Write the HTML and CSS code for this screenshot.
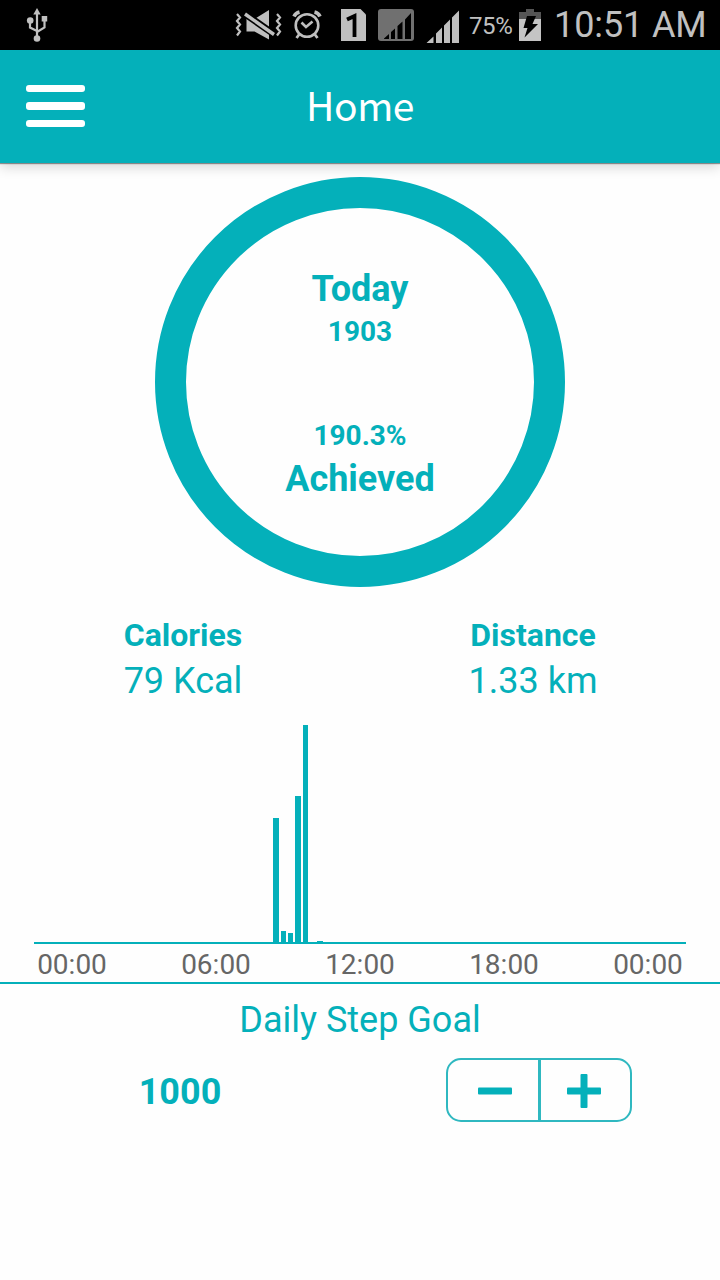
FILE: index.html
```html
<!DOCTYPE html>
<html lang="en">
<head>
  <meta charset="utf-8">
  <meta name="viewport" content="width=device-width, initial-scale=1.0">
  <title>Home</title>
  <link rel="stylesheet" href="styles.css">
</head>
<body>
  <div class="status-bar">
    <svg class="icon-usb" width="22" height="36" viewBox="0 0 22 36" fill="none" stroke="#c0c0c0" stroke-width="2.200">
      <path d="M11 5v26M4 13v7.500l7 3.500M18.500 11v9.500l-7.500 4.500"/>
      <path d="M11 1l3.700 6.500H7.300z" fill="#c0c0c0" stroke="none"/>
      <circle cx="4.200" cy="13.500" r="3.300" fill="#c0c0c0" stroke="none"/>
      <rect x="15.700" y="9" width="5.500" height="5.500" fill="#c0c0c0" stroke="none"/>
      <circle cx="11" cy="31.500" r="3.300" fill="#c0c0c0" stroke="none"/>
    </svg>
    <svg class="icon-tray" width="228" height="50" viewBox="232 0 228 50" fill="#bfbfbf">
      <!-- vibrate / muted -->
      <path d="M246.500 19h8L269 10v29.500l-14.500-8h-8z"/>
      <path d="M243 12.500l33 23" stroke="#000" stroke-width="7"/>
      <path d="M245 14l29 20.500" stroke="#bfbfbf" stroke-width="3.400"/>
      <path d="M237 14l3 3.500-3 3.500 3 3.500-3 3.500 3 3.500-3 4M277 14l3 3.500-3 3.500 3 3.500-3 3.500 3 3.500-3 4" fill="none" stroke="#bfbfbf" stroke-width="2.200"/>
      <!-- alarm -->
      <g fill="none" stroke="#bfbfbf">
        <circle cx="307" cy="25.500" r="11.300" stroke-width="2.600"/>
        <path d="M301.500 22.500l4.500 4.500 6.500-5.500" stroke-width="2.600"/>
        <path d="M294 16.500q1.500-3.500 5.500-4.500M314.500 12q4 1 5.500 4.500" stroke-width="3.600"/>
        <path d="M299.500 34l-3 4M314.500 34l3 4" stroke-width="2.800"/>
      </g>
      <!-- sim 1 -->
      <path d="M341 9h19.500l5.500 5.500V41h-25z"/>
      <path d="M347 19.500l7.500-3.500v21" fill="none" stroke="#000" stroke-width="3.800"/>
      <!-- signal, no service -->
      <rect x="378" y="9" width="36" height="32" rx="3" fill="#707070"/>
      <path d="M384 39v-.5l5-4.500v5zM391 39v-7l4-3.500V39zM397.500 39V26l5-4.500V39zM405 39V19.500l6-6.500v26z" fill="#000"/>
      <!-- signal -->
      <path d="M426.500 43l7-6.500V43zM436 43v-9.500l6-6V43zM444 43V25.500l6-6V43zM452 43V17.500l7-7V43z"/>
    </svg>
    <span class="battery-level">75%</span>
    <svg class="icon-battery" width="22" height="32" viewBox="0 0 22 32">
      <path d="M7 0h8v3h7v7H0V3h7z" fill="#555"/>
      <path d="M0 10h22v22H0z" fill="#c4c4c4"/>
      <path d="M8 7h9l-3.500 8H19L5.500 28.500l3-9.500H4.500z" fill="#000"/>
    </svg>
    <span class="clock">10:51 AM</span>
  </div>

  <header class="app-bar">
    <div class="menu">
      <span></span>
      <span></span>
      <span></span>
    </div>
    <h1>Home</h1>
  </header>

  <main>
    <div class="ring">
      <div class="ring-label">Today</div>
      <div class="ring-value">1903</div>
      <div class="ring-value percent">190.3%</div>
      <div class="ring-label">Achieved</div>
    </div>

    <div class="stats">
      <div class="stat">
        <h2>Calories</h2>
        <p>79 Kcal</p>
      </div>
      <div class="stat">
        <h2>Distance</h2>
        <p>1.33 km</p>
      </div>
    </div>

    <div class="chart">
      <svg width="652" height="219" viewBox="0 0 652 219" fill="#04b0ba">
        <rect x="239" y="93" width="6" height="124"/>
        <rect x="247" y="206" width="5" height="11"/>
        <rect x="254" y="208" width="5" height="9"/>
        <rect x="261" y="71" width="6" height="146"/>
        <rect x="269" y="0" width="5" height="217"/>
        <rect x="283" y="216" width="6" height="1"/>
        <rect x="0" y="217" width="652" height="2"/>
      </svg>
    </div>
    <div class="hours">
      <span>00:00</span>
      <span>06:00</span>
      <span>12:00</span>
      <span>18:00</span>
      <span>00:00</span>
    </div>

    <div class="goal">
      <p class="goal-title">Daily Step Goal</p>
      <div class="goal-row">
        <span class="goal-value">1000</span>
        <div class="stepper">
          <button type="button" aria-label="Decrease">
            <svg width="34" height="34" viewBox="0 0 34 34"><rect x="0" y="13.500" width="34" height="7" rx="1"/></svg>
          </button>
          <button type="button" aria-label="Increase">
            <svg width="34" height="34" viewBox="0 0 34 34"><rect x="0" y="13.500" width="34" height="7" rx="1"/><rect x="13.500" y="0" width="7" height="34" rx="1"/></svg>
          </button>
        </div>
      </div>
    </div>
  </main>
</body>
</html>
```

FILE: styles.css
```css
* {
  box-sizing: border-box;
  margin: 0;
  padding: 0;
}

body {
  width: 720px;
  height: 1280px;
  background: #fefefe;
  color: #04b0ba;
  font-family: Roboto, sans-serif;
  overflow: hidden;
}

.status-bar {
  display: flex;
  align-items: center;
  height: 50px;
  background: #000;
  color: #c0c0c0;
}

.icon-usb {
  margin-left: 26px;
}

.icon-tray {
  margin-left: 184px;
}

.battery-level {
  width: 50px;
  margin-left: 9px;
  font-size: 24px;
  letter-spacing: -0.4px;
  line-height: 50px;
  padding-top: 1px;
}

.icon-battery {
  margin-top: -1px;
}

.clock {
  margin-left: 13px;
  font-size: 36px;
  letter-spacing: -0.1px;
  line-height: 50px;
  white-space: nowrap;
}

.app-bar {
  display: grid;
  grid-template-columns: 112px 1fr 112px;
  align-items: center;
  height: 113px;
  background: #04b0ba;
  color: #fff;
  box-shadow: 0 1px 1px rgba(0, 0, 0, 0.4), 0 4px 12px rgba(0, 0, 0, 0.16);
}

.menu {
  display: grid;
  gap: 10px;
  width: 59px;
  margin: 0 0 1px 26.4px;
}

.menu span {
  height: 7.500px;
  border-radius: 3px;
  background: #fff;
}

.app-bar h1 {
  padding-bottom: 5px;
  font-family: "Noto Sans CJK JP", sans-serif;
  font-size: 39px;
  font-weight: 400;
  line-height: 56px;
  letter-spacing: -0.4px;
  text-align: center;
}

.ring {
  width: 410px;
  height: 410px;
  margin: 14px auto 0;
  padding-top: 59px;
  border: 31px solid #04b0ba;
  border-radius: 50%;
  text-align: center;
}

.ring-label {
  font-size: 36px;
  font-weight: 700;
  line-height: 44px;
}

.ring-value {
  font-size: 28px;
  font-weight: 700;
  line-height: 42px;
}

.ring-value.percent {
  margin-top: 62px;
}

.stats {
  display: grid;
  grid-template-columns: 1fr 1fr;
  padding: 26px 12px 0 8px;
  text-align: center;
}

.stat h2 {
  font-size: 32px;
  font-weight: 700;
  line-height: 44px;
}

.stat p {
  padding-top: 1px;
  font-size: 36px;
  line-height: 46px;
}

.chart {
  height: 219px;
  margin: 21px 34px 0;
}

.chart svg {
  display: block;
}

.hours {
  display: grid;
  grid-template-columns: repeat(5, 1fr);
  height: 40px;
  border-bottom: 2px solid #04b0ba;
  color: #666;
  font-size: 28px;
  line-height: 41px;
  text-align: center;
}

.goal-title {
  padding-top: 14px;
  font-size: 36px;
  line-height: 44px;
  text-align: center;
}

.goal-row {
  display: grid;
  grid-template-columns: 1fr 1fr;
  align-items: center;
  justify-items: center;
  margin-top: 16px;
}

.goal-value {
  padding-top: 3px;
  font-size: 36px;
  font-weight: 700;
}

.stepper {
  display: grid;
  grid-template-columns: 90px 1fr;
  width: 186px;
  height: 64px;
  margin-right: 2px;
  border: 2px solid #2fb8c0;
  border-radius: 15px;
}

.stepper button {
  display: flex;
  align-items: center;
  justify-content: center;
  padding: 2px 0 0 3px;
  border: 0;
  background: none;
}

.stepper button + button {
  padding: 2px 3px 0 0;
  border-left: 3px solid #2fb8c0;
}

.stepper svg {
  fill: #04b0ba;
}
```
